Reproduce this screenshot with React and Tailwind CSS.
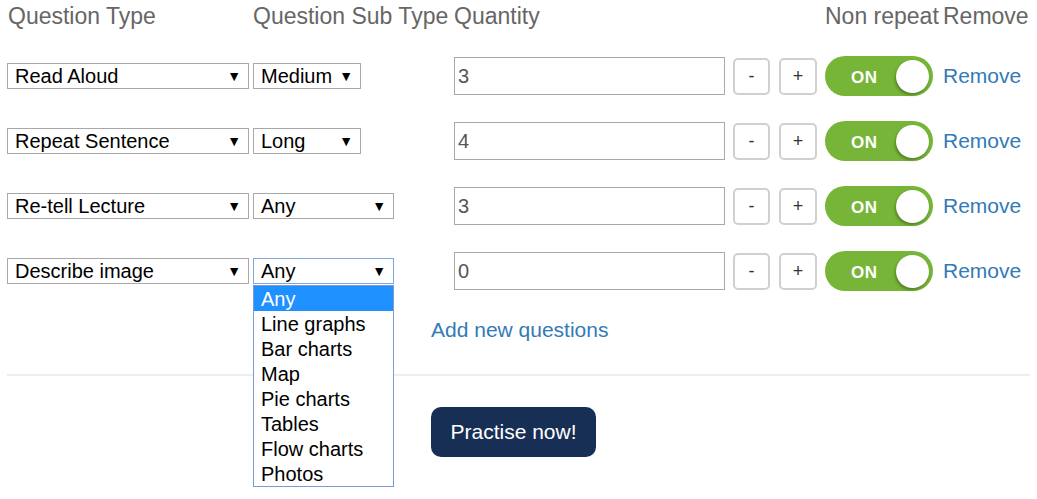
import { useState } from "react";

const rows = [
  { type: "Read Aloud", sub: "Medium", subWidth: "w-[108px]", qty: "3" },
  { type: "Repeat Sentence", sub: "Long", subWidth: "w-[108px]", qty: "4" },
  { type: "Re-tell Lecture", sub: "Any", subWidth: "w-[141px]", qty: "3" },
  { type: "Describe image", sub: "Any", subWidth: "w-[141px]", qty: "0", open: true },
];

const subOptions = [
  "Any",
  "Line graphs",
  "Bar charts",
  "Map",
  "Pie charts",
  "Tables",
  "Flow charts",
  "Photos",
];

function FakeSelect({ value, className, focused }) {
  return (
    <div
      className={`flex h-[26px] items-center justify-between bg-white pl-[7px] pr-[7px] text-[20px] text-black border ${
        focused ? "border-[#7ea6e0]" : "border-[#a9a9a9]"
      } ${className}`}
    >
      <span className="leading-none">{value}</span>
      <span className="text-[14px] leading-none">▼</span>
    </div>
  );
}

function Toggle() {
  return (
    <div className="flex h-[40px] w-[108px] items-center justify-between rounded-full bg-[#76b537] pl-[26px] pr-[4px]">
      <span className="mt-[3px] text-[17px] font-bold tracking-[0.5px] text-white">ON</span>
      <span className="h-[33px] w-[33px] rounded-full bg-white shadow-[-1px_2px_3px_rgba(0,0,0,0.3)]" />
    </div>
  );
}

export default function App() {
  const [items] = useState(rows);

  return (
    <div className="min-h-[499px] bg-white pl-[7px] pr-[7px] font-['Liberation_Sans',Arial,sans-serif]">
      {/* Header */}
      <div className="flex h-[32px] items-center text-[23px] text-[#666666]">
        <div className="w-[246px] pl-[1px]">Question Type</div>
        <div className="w-[201px]">Question Sub Type</div>
        <div className="w-[371px]">Quantity</div>
        <div className="w-[118px] whitespace-nowrap">Non repeat</div>
        <div>Remove</div>
      </div>

      {/* Question rows */}
      <div className="mt-[24px] flex flex-col gap-[25px]">
        {items.map((row, i) => (
          <div key={i} className="flex h-[40px] items-center">
            <div className="w-[246px]">
              <FakeSelect value={row.type} className="w-[242px]" />
            </div>
            <div className="relative w-[201px]">
              <FakeSelect value={row.sub} className={row.subWidth} focused={row.open} />
              {row.open && (
                <div className="absolute left-0 top-[27px] z-10 w-[141px] border border-[#7a9cd3] bg-white text-[20px] text-black">
                  {subOptions.map((opt, idx) => (
                    <div
                      key={opt}
                      className={`flex h-[25px] items-center pl-[7px] ${
                        idx === 0 ? "bg-[#1e90ff] text-white" : ""
                      }`}
                    >
                      {opt}
                    </div>
                  ))}
                </div>
              )}
            </div>
            <div className="flex w-[371px] items-center">
              <div className="flex h-[38px] w-[271px] items-center border border-[#a9a9a9] pl-[3px] text-[20px] text-[#555555]">
                {row.qty}
              </div>
              <button className="ml-[8px] flex h-[37px] w-[37px] items-center justify-center rounded-[5px] border-2 border-[#d0d0d0] bg-white text-[18px] text-[#333333]">
                -
              </button>
              <button className="ml-[9px] flex h-[37px] w-[38px] items-center justify-center rounded-[5px] border-2 border-[#d0d0d0] bg-white text-[18px] text-[#333333]">
                +
              </button>
            </div>
            <div className="w-[118px]">
              <Toggle />
            </div>
            <a className="text-[21px] text-[#337ab7] leading-none -mt-[2px]">Remove</a>
          </div>
        ))}
      </div>

      {/* Add new */}
      <div className="mt-[23px] pl-[424px]">
        <a className="text-[21px] text-[#337ab7]">Add new questions</a>
      </div>

      <div className="mt-[28px] h-[2px] w-[1023px] bg-[#eeeeee]" />

      <div className="mt-[31px] pl-[424px]">
        <button className="h-[50px] w-[165px] rounded-[10px] bg-[#172f55] text-[21px] text-white">
          Practise now!
        </button>
      </div>
    </div>
  );
}
